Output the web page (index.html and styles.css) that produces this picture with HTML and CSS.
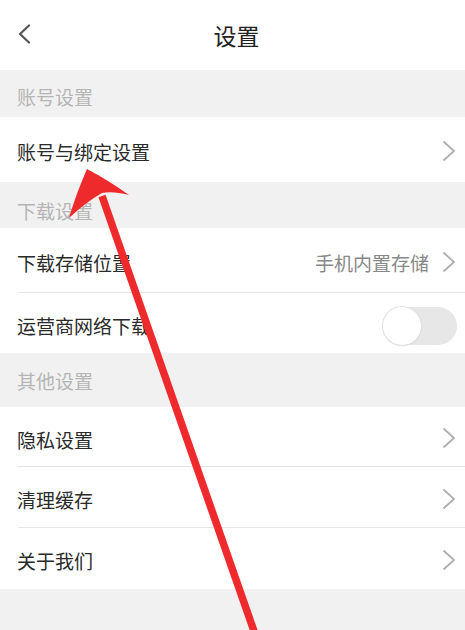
FILE: index.html
```html
<!DOCTYPE html>
<html lang="zh-CN">
<head>
<meta charset="utf-8">
<title>设置</title>
<link rel="stylesheet" href="styles.css">
</head>
<body>
<div class="page">
  <header class="header">
    <svg class="back" width="14" height="20" viewBox="0 0 14 20"><path d="M12 1.5 L3 10 L12 18.5" fill="none" stroke="#555" stroke-width="2.2" stroke-linecap="round" stroke-linejoin="round"/></svg>
    <div class="title">设置</div>
  </header>

  <div class="section s1">账号设置</div>
  <div class="row r65">
    <span class="label">账号与绑定设置</span>
    <svg class="chev" width="14" height="22" viewBox="0 0 14 22"><path d="M1.5 1.5 L12 11 L1.5 20.5" fill="none" stroke="#aeaeae" stroke-width="1.8"/></svg>
  </div>

  <div class="section s2">下载设置</div>
  <div class="row r65 sep">
    <span class="label">下载存储位置</span>
    <span class="value">手机内置存储</span>
    <svg class="chev" width="14" height="22" viewBox="0 0 14 22"><path d="M1.5 1.5 L12 11 L1.5 20.5" fill="none" stroke="#aeaeae" stroke-width="1.8"/></svg>
  </div>
  <div class="row r60">
    <span class="label">运营商网络下载</span>
    <span class="toggle"><span class="knob"></span></span>
  </div>

  <div class="section s3">其他设置</div>
  <div class="row r60 sep">
    <span class="label">隐私设置</span>
    <svg class="chev" width="14" height="22" viewBox="0 0 14 22"><path d="M1.5 1.5 L12 11 L1.5 20.5" fill="none" stroke="#aeaeae" stroke-width="1.8"/></svg>
  </div>
  <div class="row r61 sep">
    <span class="label">清理缓存</span>
    <svg class="chev" width="14" height="22" viewBox="0 0 14 22"><path d="M1.5 1.5 L12 11 L1.5 20.5" fill="none" stroke="#aeaeae" stroke-width="1.8"/></svg>
  </div>
  <div class="row r61">
    <span class="label">关于我们</span>
    <svg class="chev" width="14" height="22" viewBox="0 0 14 22"><path d="M1.5 1.5 L12 11 L1.5 20.5" fill="none" stroke="#aeaeae" stroke-width="1.8"/></svg>
  </div>

  <svg class="arrow" width="465" height="630" viewBox="0 0 465 630">
    <line x1="102" y1="196" x2="255" y2="634" stroke="#ee2a2c" stroke-width="7.5"/>
    <path d="M87 169 Q108 180 129 195 Q113 191 102 193 Q86 202 69 218 Q76 194 87 169 Z" fill="#ee2a2c"/>
  </svg>
</div>
</body>
</html>
```

FILE: styles.css
```css
html, body {
  margin: 0;
  padding: 0;
  background: #f1f1f1;
}
body {
  font-family: "Noto Sans CJK SC", "Noto Sans", sans-serif;
  width: 465px;
  height: 630px;
  overflow: hidden;
}
.page {
  position: relative;
  width: 465px;
  height: 630px;
  background: #f1f1f1;
}
.header {
  position: relative;
  height: 70px;
  background: #fff;
  display: flex;
  align-items: center;
  justify-content: center;
}
.back {
  position: absolute;
  left: 17px;
  top: 24px;
}
.title {
  font-size: 23px;
  color: #222;
  line-height: 1;
  margin-top: 0;
  margin-left: 8px;
}
.section {
  box-sizing: border-box;
  padding-left: 17px;
  font-size: 19px;
  line-height: 1;
  color: #b5b5b5;
  background: #f1f1f1;
}
.s1 { height: 47px; padding-top: 17px; }
.s2 { height: 46px; padding-top: 19px; }
.s3 { height: 54px; padding-top: 18px; }
.row {
  position: relative;
  box-sizing: border-box;
  background: #fff;
  display: flex;
  align-items: center;
  padding: 4px 9px 0 17px;
}
.r65 { height: 65px; }
.r60 { height: 60px; }
.r61 { height: 61px; }
.sep::after {
  content: "";
  position: absolute;
  left: 18px;
  right: 0;
  bottom: 0;
  height: 1px;
  background: #e6e6e6;
}
.label {
  flex: 1;
  font-size: 19px;
  line-height: 1;
  color: #2a2a2a;
}
.value {
  font-size: 19px;
  line-height: 1;
  color: #888;
  margin-right: 13px;
}
.chev {
  display: block;
  margin-top: -2px;
}
.toggle {
  position: relative;
  display: block;
  width: 74px;
  height: 38px;
  border-radius: 19px;
  background: #e7e7e7;
  margin-right: -1px;
  margin-top: 2px;
}
.knob {
  position: absolute;
  left: 0;
  top: 0;
  width: 38px;
  height: 38px;
  border-radius: 50%;
  background: #fff;
  box-shadow: 0 0 0 1px #e0e0e0, 0 1px 2px rgba(0,0,0,0.08);
}
.arrow {
  position: absolute;
  left: 0;
  top: 0;
  pointer-events: none;
}
```
